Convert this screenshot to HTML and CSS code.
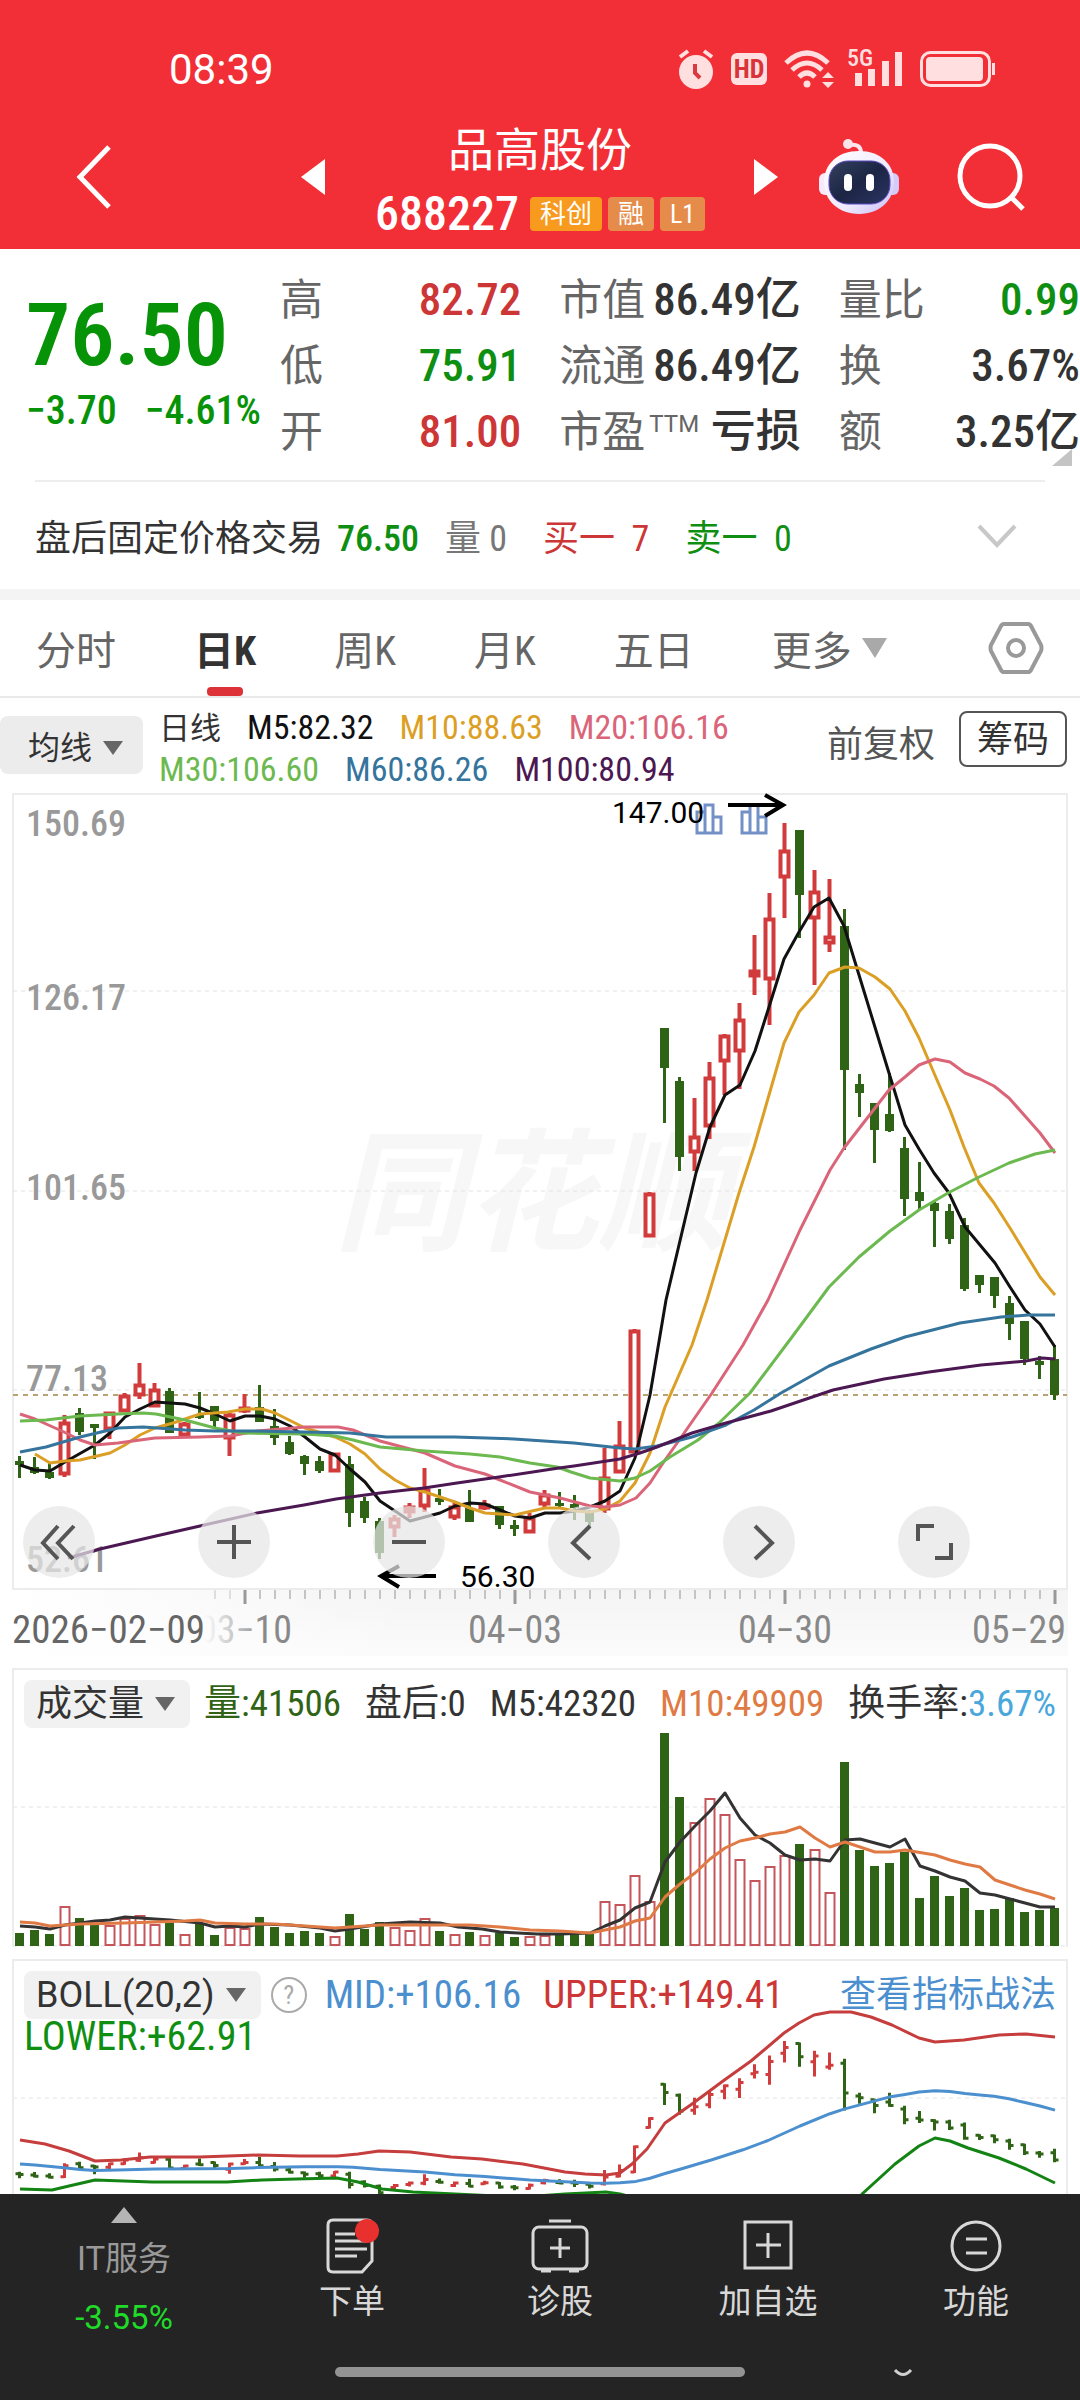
FILE: index.html
```html
<!DOCTYPE html>
<html lang="zh-CN">
<head>
<meta charset="utf-8">
<meta name="viewport" content="width=device-width, initial-scale=1">
<title>品高股份 688227</title>
<link rel="stylesheet" href="styles.css">
</head>
<body>
<header class="top">
  <div class="status">
    <time class="clock">08:39</time>
    <div class="status-icons">
      <svg width="36" height="40" viewBox="0 0 36 40" aria-hidden="true"><circle cx="18" cy="23" r="17" fill="#ffdfe0"/><path d="M2 8 10 2M34 8 26 2" stroke="#ffdfe0" stroke-width="4"/><path d="M17 15v9l5 5" stroke="#d93a40" stroke-width="4" fill="none"/></svg>
      <span class="hd">HD</span>
      <svg width="50" height="40" viewBox="0 0 50 40" fill="none" aria-hidden="true"><path d="M2 14Q23-6 44 14M8 21Q23 7 38 21M15 28Q23 20 31 28" stroke="#ffdfe0" stroke-width="5"/><circle cx="23" cy="35" r="3.500" fill="#ffdfe0"/><path d="M38 29h12l-6-6zM38 33h12l-6 6z" fill="#ffdfe0"/></svg>
      <span class="signal"><span class="net">5G</span><svg width="50" height="36" viewBox="0 0 50 36" fill="#ffdfe0" aria-hidden="true"><path d="M2 22h7v13H2zM15 18h7v17h-7zM29 10h7v25h-7zM42 1h7v34h-7z"/></svg></span>
      <svg width="76" height="36" viewBox="0 0 76 36" aria-hidden="true"><rect x="1.500" y="1.500" width="68" height="33" rx="9" fill="none" stroke="#ffdfe0" stroke-width="3"/><rect x="6" y="6" width="57" height="24" rx="4" fill="#ffdfe0"/><path d="M72 12h3v12h-3z" fill="#ffdfe0"/></svg>
    </div>
  </div>
  <div class="titlebar">
    <div class="title-left">
      <button class="plain" aria-label="返回"><svg width="36" height="64" viewBox="0 0 36 64"><path d="M33 2 4 32l29 30" fill="none" stroke="#fff" stroke-width="5"/></svg></button>
      <button class="plain" aria-label="上一只"><svg width="24" height="36" viewBox="0 0 24 36"><path d="M24 0v36L0 18z" fill="#fff"/></svg></button>
    </div>
    <div class="title">
      <h1>品高股份</h1>
      <p class="code">688227 <span class="tag tag-hot">科创</span><span class="tag">融</span><span class="tag">L1</span></p>
    </div>
    <div class="title-right">
      <button class="plain" aria-label="下一只"><svg width="24" height="36" viewBox="0 0 24 36"><path d="M0 0v36l24-18z" fill="#fff"/></svg></button>
      <button class="plain" aria-label="智能助手"><svg width="82" height="76" viewBox="0 0 82 76"><defs><linearGradient id="shell" x1="0" y1="0" x2="1" y2="1"><stop offset="0" stop-color="#fff"/><stop offset=".6" stop-color="#f0eafd"/><stop offset="1" stop-color="#c5bcf7"/></linearGradient><linearGradient id="face" x1="0" y1="0" x2="1" y2="1"><stop offset="0" stop-color="#35415f"/><stop offset=".5" stop-color="#1c2544"/><stop offset="1" stop-color="#2a3564"/></linearGradient></defs><path d="M43 14Q43 4 31 6" fill="none" stroke="#fde6ee" stroke-width="4"/><circle cx="30" cy="5" r="5" fill="#fbe3ea"/><rect x="1" y="34" width="14" height="22" rx="6" fill="#f7e9fb"/><rect x="67" y="34" width="14" height="22" rx="6" fill="#d5caf8"/><path d="M41 12C62 12 76 25 76 43S62 75 41 75 6 61 6 43 20 12 41 12z" fill="url(#shell)"/><rect x="11" y="22" width="61" height="43" rx="19" fill="url(#face)" stroke="#5a4bc0" stroke-width="1"/><rect x="26" y="35" width="8" height="17" rx="4" fill="#fff"/><rect x="48" y="35" width="8" height="17" rx="4" fill="#fff"/></svg></button>
      <button class="plain search" aria-label="搜索"><svg width="68" height="68" viewBox="0 0 68 68" fill="none" stroke="#fff" stroke-width="5"><circle cx="33" cy="33" r="30"/><path d="m54 54 12 12"/></svg></button>
    </div>
  </div>
</header>

<main>
<section class="quote">
  <div class="price-block">
    <strong class="price">76.50</strong>
    <p class="change"><span>−3.70</span><span>−4.61%</span></p>
  </div>
  <dl class="facts">
    <div><dt>高</dt><dd class="red">82.72</dd></div>
    <div><dt>低</dt><dd class="green">75.91</dd></div>
    <div><dt>开</dt><dd class="red">81.00</dd></div>
  </dl>
  <dl class="facts">
    <div><dt>市值</dt><dd>86.49亿</dd></div>
    <div><dt>流通</dt><dd>86.49亿</dd></div>
    <div><dt>市盈<small>TTM</small></dt><dd>亏损</dd></div>
  </dl>
  <dl class="facts">
    <div><dt>量比</dt><dd class="green">0.99</dd></div>
    <div><dt>换</dt><dd>3.67%</dd></div>
    <div><dt>额</dt><dd>3.25亿</dd></div>
  </dl>
  <svg class="corner" width="20" height="17" viewBox="0 0 20 17" aria-hidden="true"><path d="M20 0v17H0z" fill="#c4c4c4"/></svg>
</section>

<section class="after">
  <span class="after-name">盘后固定价格交易</span>
  <span class="green after-price">76.50</span>
  <span class="muted">量 0</span>
  <span class="red">买一&nbsp; 7</span>
  <span class="green">卖一&nbsp; 0</span>
  <button class="plain expand" aria-label="展开"><svg width="40" height="24" viewBox="0 0 40 24"><path d="m2 2 18 19L38 2" fill="none" stroke="#c8c8c8" stroke-width="4"/></svg></button>
</section>

<nav class="periods" aria-label="周期">
  <button class="plain">分时</button>
  <button class="plain current">日K</button>
  <button class="plain">周K</button>
  <button class="plain">月K</button>
  <button class="plain">五日</button>
  <button class="plain more">更多<svg width="25" height="20" viewBox="0 0 25 20"><path d="M0 0h25L13 20z" fill="#a9a9a9"/></svg></button>
  <button class="plain settings" aria-label="设置"><svg width="56" height="54" viewBox="0 0 56 54" fill="none" stroke="#999" stroke-width="4"><path d="M16 3h24q2 0 3 2l10 19q1 3 0 6L43 49q-1 2-3 2H16q-2 0-3-2L3 30q-1-3 0-6L13 5q1-2 3-2z"/><circle cx="28" cy="27" r="8"/></svg></button>
</nav>

<section class="averages">
  <button class="picker picker-edge">均线<svg width="20" height="14" viewBox="0 0 20 14"><path d="M0 0h20L10 14z" fill="#666"/></svg></button>
  <div class="legend">
    <p><span class="cjk">日线</span><span class="m5">M5:82.32</span><span class="m10">M10:88.63</span><span class="m20">M20:106.16</span></p>
    <p><span class="m30">M30:106.60</span><span class="m60">M60:86.26</span><span class="m100">M100:80.94</span></p>
  </div>
  <button class="plain adjust">前复权</button>
  <button class="chips">筹码</button>
</section>

<section class="kline">
  <svg id="kline" viewBox="0 792 1080 864" role="img" aria-label="日K线图">
    <defs>
      <linearGradient id="axisShade" x1="0" y1="0" x2="0" y2="1"><stop offset="0" stop-color="#f4f4f4"/><stop offset="1" stop-color="#fbfbfb"/></linearGradient>
      <linearGradient id="axisFade" x1="0" y1="0" x2="1" y2="0"><stop offset="0" stop-color="#fff"/><stop offset="1" stop-color="#fff" stop-opacity="0"/></linearGradient>
      <linearGradient id="dateFade" gradientUnits="userSpaceOnUse" x1="204" y1="0" x2="265" y2="0"><stop offset="0" stop-color="#999" stop-opacity="0"/><stop offset="1" stop-color="#888"/></linearGradient>
    </defs>
    <rect x="12" y="1589" width="1056" height="67" fill="url(#axisShade)"/>
    <rect x="12" y="1589" width="400" height="67" fill="url(#axisFade)"/>
    <rect x="13" y="794" width="1054" height="795" class="frame"/>
    <text x="334" y="1240" class="watermark">同花顺</text>
    <path d="M13 991H1067M13 1191H1067M13 1390H1067" class="grid"/>
    <g class="scale"><text x="26" y="836">150.69</text><text x="26" y="1010">126.17</text><text x="26" y="1200">101.65</text><text x="26" y="1391">77.13</text><text x="26" y="1572">52.61</text></g>
    <path d="M13 1395H1067" class="last-price"/>
    <g class="events"><path d="M697 812h8v21h-8zM705 805h8v28h-8zM713 817h8v16h-8zM742 812h8v21h-8zM750 805h8v28h-8zM758 817h8v16h-8z"/></g>
    <g id="candles"></g>
    <g id="lines"></g>
    <path d="M728 805h54M765 795l18 10-18 11" class="arrow"/>
    <text x="612" y="823" class="mark">147.00</text>
    <path d="M436 1576h-54M399 1566l-18 10 18 11" class="arrow"/>
    <text x="460" y="1587" class="mark">56.30</text>
    <g id="ticks"></g>
    <g class="dates"><text x="12" y="1643" class="first">2026−02−09</text><text x="245" y="1643" text-anchor="middle" fill="url(#dateFade)">03−10</text><text x="515" y="1643" text-anchor="middle">04−03</text><text x="785" y="1643" text-anchor="middle">04−30</text><text x="1066" y="1643" text-anchor="end">05−29</text></g>
  </svg>
  <div class="tools">
    <button aria-label="最左"><svg viewBox="0 0 72 72"><path d="M35 20 20 37l15 16M51 20 35 37l15 16"/></svg></button>
    <button aria-label="放大"><svg viewBox="0 0 72 72"><path d="M36 19v34M19 36h34"/></svg></button>
    <button aria-label="缩小"><svg viewBox="0 0 72 72"><path d="M19 36h34"/></svg></button>
    <button aria-label="左移"><svg viewBox="0 0 72 72"><path d="M42 20 25 37l17 16"/></svg></button>
    <button aria-label="右移"><svg viewBox="0 0 72 72"><path d="m32 20 17 17-17 16"/></svg></button>
    <button aria-label="全屏"><svg viewBox="0 0 72 72"><path d="M20 35V20h16M53 37v15H37"/></svg></button>
  </div>
</section>

<section class="panel volume">
  <div class="panel-head">
    <button class="picker">成交量<svg width="20" height="14" viewBox="0 0 20 14"><path d="M0 0h20L10 14z" fill="#666"/></svg></button>
    <p class="figures"><span class="vol">量:41506</span><span>盘后:0</span><span>M5:42320</span><span class="vm10">M10:49909</span><span>换手率:<span class="turn">3.67%</span></span></p>
  </div>
  <svg id="volume" viewBox="14 1728 1052 219" role="img" aria-label="成交量图"><path d="M13 1807H1067M13 1946H1067" class="grid"/></svg>
</section>

<section class="panel boll">
  <svg id="boll" viewBox="14 1960 1052 233" role="img" aria-label="布林线图"><path d="M13 2097H1067" class="grid"/></svg>
  <div class="panel-over">
    <div class="panel-head">
      <button class="picker wide">BOLL(20,2)<svg width="20" height="14" viewBox="0 0 20 14"><path d="M0 0h20L10 14z" fill="#666"/></svg></button>
      <button class="help" aria-label="说明">?</button>
      <p class="bands"><span class="mid">MID:+106.16</span><span class="upper">UPPER:+149.41</span></p>
      <a href="#boll" class="guide">查看指标战法</a>
    </div>
    <p class="lower">LOWER:+62.91</p>
  </div>
</section>
</main>

<footer class="dock">
  <div class="dock-row">
    <a href="#kline" class="sector"><svg width="26" height="16" viewBox="0 0 26 16"><path d="M13 0 26 16H0z" fill="#b5b5b5"/></svg><span>IT服务</span><b>-3.55%</b></a>
    <button class="plain"><svg width="54" height="56" viewBox="0 0 54 56"><path d="M8 2h34q5 0 5 5v36L37 54H8q-5 0-5-5V7q0-5 5-5z"/><path d="M10 16h20M10 23h32M10 31h32M10 38h22"/><circle cx="42" cy="13" r="12" class="dot"/></svg>下单</button>
    <button class="plain"><svg width="58" height="56" viewBox="0 0 58 56"><rect x="2" y="9" width="54" height="42" rx="6"/><path d="M18 3h22M29 20v20M19 30h20M10 53h10M38 53h10"/></svg>诊股</button>
    <button class="plain"><svg width="50" height="56" viewBox="0 0 50 56"><path d="M2 4h46v46H2zM25 15v25M13 27h25"/></svg>加自选</button>
    <button class="plain"><svg width="52" height="56" viewBox="0 0 52 56"><circle cx="26" cy="28" r="24"/><path d="M16 21h21M16 35h21"/></svg>功能</button>
  </div>
  <div class="home"></div>
  <svg class="smile" width="20" height="10" viewBox="0 0 20 10" aria-hidden="true"><path d="M2 2q8 9 16 0" fill="none" stroke="#d0d0d0" stroke-width="3"/></svg>
</footer>
<script src="chart.js"></script>
</body>
</html>
```
FILE: styles.css
```css
* { box-sizing: border-box; }
body {
  margin: 0;
  background: #fff;
  color: #333;
  font-family: "Roboto Condensed", Roboto, "Noto Sans CJK SC", sans-serif;
  font-size: 36px;
}
h1, p, dl, dd { margin: 0; }
button { font: inherit; color: inherit; cursor: pointer; }
svg { display: block; flex: none; }
.plain { border: 0; padding: 0; background: none; }
.red { color: #cd3636; }
.green { color: #0f8f12; }
.muted { color: #777; }

/* header */
.top { background: #f22f36; color: #fff; }
.status { display: flex; justify-content: space-between; align-items: center; padding: 34px 84px 0 169px; height: 104px; }
.clock { font-family: Roboto, sans-serif; font-size: 42px; }
.status-icons { display: flex; align-items: center; gap: 17px; }
.hd { width: 36px; height: 32px; border-radius: 6px; background: #ffdfe0; color: #d9343a; font-size: 26px; font-weight: 700; line-height: 32px; text-align: center; }
.signal { position: relative; padding-left: 2px; }
.net { position: absolute; left: -4px; top: -5px; color: #ffdfe0; font-size: 24px; font-weight: 500; line-height: 24px; }
.titlebar { display: grid; grid-template-columns: 1fr auto 1fr; height: 145px; align-items: center; }
.title-left { display: flex; justify-content: space-between; align-items: center; padding: 0 50px 0 76px; }
.title-right { display: flex; align-items: center; gap: 40px; padding: 0 55px 0 49px; }
.search { margin-left: auto; }
.title { padding-top: 10px; text-align: center; }
.title h1 { font-size: 46px; font-weight: 400; line-height: 64px; }
.code { display: flex; align-items: center; gap: 6px; font-size: 48px; font-weight: 500; line-height: 64px; }
.tag { padding: 0 10px; border-radius: 4px; background: #e58c4a; font-size: 26px; font-weight: 400; line-height: 34px; }
.tag-hot { margin-left: 5px; background: #f79a1d; }

/* quote */
.quote { position: relative; display: grid; grid-template-columns: 216px 1fr 1fr 1fr; column-gap: 38px; margin: 0 0 0 26px; padding: 18px 0 15px; }
.price-block { padding-top: 23px; color: #079307; white-space: nowrap; }
.price { display: block; font-size: 88px; font-weight: 600; line-height: 90px; }
.change { display: flex; gap: 28px; font-size: 40px; font-weight: 500; line-height: 62px; }
.facts div { display: flex; justify-content: space-between; align-items: baseline; height: 66px; font-size: 45px; line-height: 66px; white-space: nowrap; }
.facts dt { display: flex; color: #666; font-size: 43px; }
.facts dd { font-weight: 500; }
.facts small { margin-left: 4px; font-family: Roboto, sans-serif; font-size: 24px; line-height: 50px; }
.corner { position: absolute; right: 8px; bottom: 14px; }

.after { display: flex; align-items: baseline; height: 109px; line-height: 114px; margin: 0 35px; padding-right: 28px; border-top: 2px solid #eee; white-space: nowrap; }
.after > span { margin-right: 36px; }
.after > .after-name { margin-right: 14px; }
.after > .after-price { margin-right: 26px; font-weight: 500; }
.expand { align-self: center; margin-left: auto; }

/* period tabs */
.periods { display: flex; align-items: center; gap: 78px; height: 109px; padding: 0 36px; border-top: 11px solid #f4f4f4; border-bottom: 2px solid #e9e9e9; color: #666; font-size: 40px; }
.periods button { position: relative; height: 96px; white-space: nowrap; }
.periods .current { color: #333; font-weight: 700; }
.current::after { content: ""; position: absolute; left: 50%; bottom: 0; width: 36px; height: 9px; margin-left: -18px; border-radius: 4px; background: #dd3237; }
.periods .more { display: flex; align-items: center; gap: 10px; }
.periods .settings { margin-left: auto; }

/* moving averages */
.averages { display: flex; align-items: center; height: 94px; padding-right: 13px; white-space: nowrap; }
.picker { display: flex; align-items: center; gap: 11px; height: 48px; padding: 0 15px 0 12px; border: 0; border-radius: 8px; background: #f1f1f1; line-height: 44px; white-space: nowrap; }
.picker-edge { height: 58px; margin-right: 16px; padding: 5px 20px 0 28px; font-size: 32px; background: #ececec; }
.legend { flex: 1; padding-top: 6px; font-size: 34px; line-height: 41px; }
.legend p { display: flex; align-items: baseline; gap: 26px; }
.cjk { font-size: 31px; }
.m5 { color: #111; }
.m10 { color: #dc9f26; }
.m20 { color: #da6579; }
.m30 { color: #6cb950; }
.m60 { color: #35749c; }
.m100 { color: #4b1852; }
.adjust { margin: 0 24px 8px 0; color: #555; }
.chips { height: 56px; margin-bottom: 12px; padding: 2px 16px 0; border: 2px solid #555; border-radius: 8px; background: #fff; line-height: 50px; }

/* candles */
.kline { position: relative; }
.kline > svg, .panel > svg { width: 100%; height: auto; }
.frame { fill: none; stroke: #ececec; stroke-width: 2; }
.grid { fill: none; stroke: #e3e3e3; stroke-width: 1; stroke-dasharray: 4 4; }
.last-price { stroke: #b9a274; stroke-width: 2; stroke-dasharray: 5 5; }
.scale { fill: #999; font-size: 36px; font-weight: 500; }
.watermark { fill: #f7f7f7; font-family: "Noto Sans CJK SC", sans-serif; font-size: 132px; font-weight: 700; font-style: italic; }
.events { fill: #fff; stroke: #7391c6; stroke-width: 3; }
.arrow { fill: none; stroke: #000; stroke-width: 4; }
.mark { font-family: Roboto, sans-serif; font-size: 30px; fill: #000; }
.dates { fill: #888; font-size: 38px; }
.dates .first { fill: #666; font-size: 39px; }
.tools { position: absolute; left: 0; right: 0; bottom: 78px; display: flex; justify-content: space-between; padding: 0 110px 0 23px; }
.tools button { width: 72px; height: 72px; padding: 0; border: 0; border-radius: 50%; background: rgba(230, 230, 230, .72); }
.tools svg { width: 100%; fill: none; stroke: #555; stroke-width: 4; }

/* indicator panels */
.panel { position: relative; margin: 12px 12px 0; border: 2px solid #ececec; border-bottom: 0; }
.panel-head { display: flex; align-items: center; padding: 0 10px; line-height: 48px; white-space: nowrap; }
.volume .panel-head { height: 58px; padding-top: 10px; }
.figures { display: flex; flex: 1; align-items: baseline; justify-content: space-between; padding-left: 14px; font-size: 37px; }
.vol { color: #316316; }
.vm10 { color: #e07a44; }
.turn { color: #4aa7dc; }
.panel-over { position: absolute; left: 0; right: 0; top: 10px; }
.wide { font-family: Roboto, sans-serif; }
.help { width: 36px; height: 36px; margin: 0 18px 0 10px; padding: 0; border: 2px solid #aaa; border-radius: 50%; background: none; color: #aaa; font-size: 26px; line-height: 30px; }
.bands { display: flex; gap: 22px; font-size: 39px; }
.mid { color: #4c8fcf; }
.upper { color: #cd3636; }
.lower { padding-left: 10px; color: #0f8f12; font-size: 40px; line-height: 36px; }
.guide { margin-left: auto; color: #4c8fcf; text-decoration: none; }

/* bottom bar */
.dock { position: relative; padding-bottom: 24px; background: #242424; color: #d8d8d8; }
.dock-row { display: grid; grid-template-columns: 31fr 26fr 26fr 26fr 26fr; height: 173px; font-size: 33px; }
.dock-row button { display: flex; flex-direction: column; align-items: center; gap: 3px; padding-top: 24px; line-height: 50px; }
.dock-row button svg { fill: none; stroke: #d8d8d8; stroke-width: 3; }
.dock-row .dot { fill: #e8302f; stroke: none; }
.sector { display: flex; flex-direction: column; align-items: center; padding-top: 13px; color: #999; text-decoration: none; font-family: Roboto, "Noto Sans CJK SC", sans-serif; }
.sector span { margin-top: 7px; line-height: 58px; }
.sector b { color: #20dc28; font-weight: 400; line-height: 60px; }
.home { width: 38%; height: 10px; margin: 0 auto; border-radius: 5px; background: #939393; }
.smile { position: absolute; right: 167px; bottom: 23px; }
```
FILE: chart.js
```js
// Shared geometry: 70 sessions, one every 15 units.
const X0 = 19.5, STEP = 15, UP = '#d23b3b', DOWN = '#2f6416';
const NS = 'http://www.w3.org/2000/svg';

// direction (1 up, 0 down), high, body top, body bottom, low
const candles = [
[0,1456,1461,1465,1478],[0,1457,1467,1473,1474],[0,1463,1472,1478,1479],[1,1415,1422,1475,1477],[0,1408,1413,1432,1435],
[0,1424,1424,1428,1459],[1,1412,1412,1430,1439],[1,1393,1395,1412,1412],[1,1363,1384,1396,1399],[1,1383,1389,1407,1407],
[0,1388,1391,1433,1433],[1,1422,1423,1436,1436],[0,1392,1414,1418,1419],[0,1406,1406,1421,1428],[1,1412,1414,1439,1456],
[1,1394,1407,1412,1413],[0,1385,1407,1422,1422],[0,1409,1426,1438,1445],[0,1436,1442,1454,1455],[0,1455,1456,1464,1475],
[0,1456,1461,1471,1473],[1,1453,1453,1472,1472],[0,1456,1464,1513,1527],[0,1497,1501,1518,1523],[0,1518,1521,1553,1559],
[1,1515,1518,1528,1537],[1,1503,1506,1513,1518],[1,1468,1489,1507,1512],[0,1489,1498,1502,1505],[1,1503,1506,1518,1520],
[0,1490,1508,1522,1522],[1,1500,1504,1509,1510],[0,1506,1506,1525,1529],[0,1520,1525,1529,1536],[1,1513,1517,1533,1533],
[1,1490,1494,1505,1508],[0,1492,1503,1506,1507],[0,1495,1504,1508,1520],[0,1510,1512,1522,1527],[1,1448,1477,1510,1513],
[1,1421,1445,1473,1473],[1,1329,1330,1453,1453],[1,1192,1193,1237,1237],[0,1028,1028,1068,1123],[0,1077,1081,1157,1171],
[1,1098,1136,1153,1171],[1,1062,1077,1127,1139],[1,1034,1035,1062,1095],[1,1003,1019,1052,1089],[1,935,970,977,995],
[1,893,918,980,1025],[1,823,850,878,918],[0,830,830,895,938],[1,870,891,919,985],[1,879,936,944,952],
[0,909,926,1070,1150],[0,1074,1084,1093,1117],[0,1103,1103,1130,1163],[0,1073,1114,1131,1132],[0,1137,1148,1199,1216],
[0,1162,1192,1201,1210],[0,1202,1203,1211,1247],[0,1204,1211,1239,1244],[0,1218,1225,1289,1291],[0,1275,1275,1285,1293],
[0,1277,1277,1296,1308],[0,1296,1303,1324,1340],[0,1321,1321,1359,1365],[0,1356,1361,1365,1379],[0,1345,1359,1395,1400]];

const volumes = [13,16,12,40,28,21,21,28,31,22,24,12,23,11,19,18,29,19,13,15,13,10,32,17,24,19,16,28,15,12,14,11,13,9,10,11,12,13,12,45,42,71,45,213,149,124,148,132,87,66,80,91,102,97,54,184,96,80,83,94,48,70,50,58,36,37,48,34,36,38];

const ma = {
m5: ['#111','20,1465 35,1470 50,1471 65,1462 95,1445 110,1433 125,1417 140,1409 155,1402 170,1403 185,1404 200,1408 215,1414 230,1421 245,1416 260,1416 275,1419 290,1426 305,1437 320,1449 335,1455 350,1469 365,1482 380,1501 395,1511 410,1521 425,1517 440,1513 455,1506 470,1503 485,1504 500,1510 515,1516 530,1518 545,1513 560,1513 575,1511 590,1507 605,1501 620,1491 635,1458 650,1395 666,1300 696,1173 710,1127 725,1095 740,1085 755,1051 769,1007 784,959 799,932 814,907 829,898 844,926 859,975 889,1073 905,1125 919,1149 934,1173 949,1193 965,1227 980,1245 995,1263 1010,1287 1025,1310 1040,1324 1055,1347'],
m10: ['#dc9f26','35,1454 50,1463 65,1461 80,1460 110,1453 125,1445 140,1435 155,1428 173,1423 200,1414 228,1412 245,1409 262,1409 275,1413 305,1428 335,1437 350,1444 365,1454 380,1469 395,1480 410,1488 425,1492 455,1502 470,1508 485,1513 500,1514 515,1515 532,1511 545,1508 560,1508 575,1511 590,1512 605,1509 620,1501 635,1483 650,1453 665,1407 692,1345 707,1300 739,1193 754,1147 784,1043 799,1012 814,995 829,973 845,967 859,968 875,977 890,989 905,1011 919,1038 934,1073 950,1110 964,1147 979,1183 994,1203 1010,1228 1040,1277 1055,1295'],
m20: ['#da6579','20,1414 35,1419 64,1432 80,1440 95,1445 118,1443 155,1438 200,1437 230,1436 257,1431 305,1427 338,1427 353,1430 380,1441 425,1453 455,1466 485,1474 500,1480 530,1492 560,1498 590,1506 605,1507 620,1505 636,1498 650,1483 665,1460 680,1439 712,1393 743,1345 768,1300 800,1230 830,1170 844,1148 889,1090 905,1077 919,1065 935,1059 950,1062 965,1073 980,1079 994,1086 1009,1098 1025,1116 1040,1133 1055,1153'],
m30: ['#6cb950','20,1421 46,1420 80,1416 118,1414 143,1413 156,1414 185,1420 215,1428 243,1433 305,1434 335,1436 353,1440 380,1447 425,1451 470,1454 500,1457 530,1463 557,1467 571,1472 590,1478 620,1481 635,1478 650,1471 670,1457 698,1440 719,1423 750,1393 795,1333 829,1287 859,1257 890,1231 919,1210 948,1193 977,1178 1009,1163 1035,1154 1055,1150'],
m60: ['#35749c','20,1452 46,1447 80,1437 118,1428 143,1427 185,1430 215,1431 250,1431 304,1432 350,1433 386,1437 455,1437 514,1439 559,1442 574,1443 620,1448 635,1449 657,1446 692,1437 726,1425 754,1410 781,1393 829,1366 871,1349 905,1337 960,1323 1001,1317 1028,1315 1055,1315'],
m100: ['#4b1852','68,1558 100,1549 156,1536 200,1526 257,1513 304,1505 336,1499 380,1493 424,1488 457,1483 499,1477 559,1468 574,1466 620,1459 640,1453 657,1447 692,1433 726,1423 771,1411 833,1390 884,1379 929,1372 981,1365 1026,1361 1042,1358 1055,1359']
};

const volumeLines = [
['#333','20,1926 35,1927 50,1929 65,1925 80,1923 95,1921 110,1920 125,1917 140,1918 170,1920 200,1923 215,1927 230,1926 245,1927 260,1924 290,1925 320,1928 335,1931 350,1929 380,1924 410,1922 440,1923 458,1927 482,1929 500,1932 537,1934 560,1934 590,1933 605,1926 620,1920 635,1908 650,1902 665,1862 680,1842 695,1826 710,1811 725,1793 740,1818 755,1835 770,1843 785,1855 800,1860 815,1859 830,1861 845,1840 860,1839 875,1843 890,1847 905,1839 920,1866 935,1871 950,1877 965,1881 980,1893 995,1895 1010,1899 1025,1903 1040,1907 1055,1907'],
['#e07a44','20,1922 35,1923 50,1926 80,1924 125,1923 155,1922 185,1921 200,1920 215,1923 245,1924 275,1924 305,1926 335,1928 380,1925 425,1925 470,1925 500,1927 530,1930 560,1931 590,1933 620,1927 635,1921 650,1918 665,1897 680,1884 695,1873 710,1859 725,1848 740,1841 755,1838 770,1834 785,1832 800,1827 815,1838 830,1847 845,1842 860,1847 875,1852 890,1852 905,1850 935,1855 950,1860 965,1864 980,1867 995,1880 1010,1885 1025,1890 1040,1894 1055,1899']
];

const bands = [
['#c63d3d','20,2139 45,2143 69,2150 95,2160 121,2159 150,2156 200,2156 258,2154 300,2155 337,2155 358,2153 379,2150 410,2151 451,2156 482,2158 523,2163 565,2171 585,2173 606,2174 620,2172 632,2163 647,2148 665,2122 692,2103 723,2080 751,2060 784,2032 799,2022 814,2014 830,2011 851,2011 871,2016 892,2024 919,2037 935,2041 964,2039 999,2034 1026,2033 1055,2036'],
['#138313','20,2188 52,2189 69,2185 95,2179 152,2181 227,2181 262,2179 296,2178 337,2177 358,2181 382,2188 413,2191 455,2193 496,2195 537,2195 565,2193 606,2191 620,2193 647,2200 700,2215 850,2215 862,2193 895,2163 919,2145 935,2137 950,2140 968,2147 999,2157 1026,2168 1055,2182']
];

function add(parent, name, attrs) {
  const node = document.createElementNS(NS, name);
  for (const key in attrs) node.setAttribute(key, attrs[key]);
  parent.appendChild(node);
  return node;
}
function line(parent, color, points, width) {
  add(parent, 'polyline', { points, fill: 'none', stroke: color, 'stroke-width': width, 'stroke-linejoin': 'round' });
}

const candleLayer = document.getElementById('candles');
const volumeChart = document.getElementById('volume');
const bollChart = document.getElementById('boll');
const bollY = v => 2041 + (v - 823) * 0.2065;

candles.forEach(([up, high, top, bottom, low], i) => {
  const x = X0 + i * STEP, color = up ? UP : DOWN;
  if (up) {
    add(candleLayer, 'path', { d: `M${x} ${high}V${top}M${x} ${bottom}V${low}`, stroke: color, 'stroke-width': 4 });
    add(candleLayer, 'rect', { x: x - 4, y: top + 1.5, width: 8, height: Math.max(2, bottom - top - 3), fill: bottom - top < 8 ? color : '#fff', stroke: color, 'stroke-width': 4 });
  } else {
    add(candleLayer, 'path', { d: `M${x} ${high}V${low}`, stroke: color, 'stroke-width': 3 });
    add(candleLayer, 'rect', { x: x - 4.5, y: top, width: 9, height: bottom - top, fill: color });
  }

  const h = volumes[i];
  if (up) add(volumeChart, 'rect', { x: x - 4, y: 1947 - h, width: 9, height: h - 2, fill: '#fff', stroke: '#c4555a', 'stroke-width': 2 });
  else add(volumeChart, 'rect', { x: x - 4.5, y: 1946 - h, width: 9, height: h, fill: DOWN });

  const open = bollY(up ? bottom : top), close = bollY(up ? top : bottom);
  add(bollChart, 'path', { d: `M${x} ${bollY(high) - 1}V${bollY(low) + 1}M${x - 4} ${open}H${x}M${x} ${close}H${x + 4}`, stroke: color, 'stroke-width': 3 });
});

const lineLayer = document.getElementById('lines');
for (const key in ma) line(lineLayer, ma[key][0], ma[key][1], 3);
volumeLines.forEach(([color, points]) => line(volumeChart, color, points, 3));
bands.forEach(([color, points]) => line(bollChart, color, points, 3));
line(bollChart, '#4c8fcf', ma.m20[1].split(' ').map(p => {
  const [x, y] = p.split(',');
  return `${x},${bollY(+y).toFixed(1)}`;
}).join(' '), 3);

const tickLayer = document.getElementById('ticks');
for (let x = 215; x <= 1055; x += STEP) {
  const major = (x - 245) % 270 === 0;
  add(tickLayer, 'path', { d: `M${x} 1590V${major ? 1604 : 1599}`, stroke: major ? '#999' : '#c4c4c4', 'stroke-width': major ? 3 : 2, opacity: x < 245 ? 0.5 : 1 });
}
```
